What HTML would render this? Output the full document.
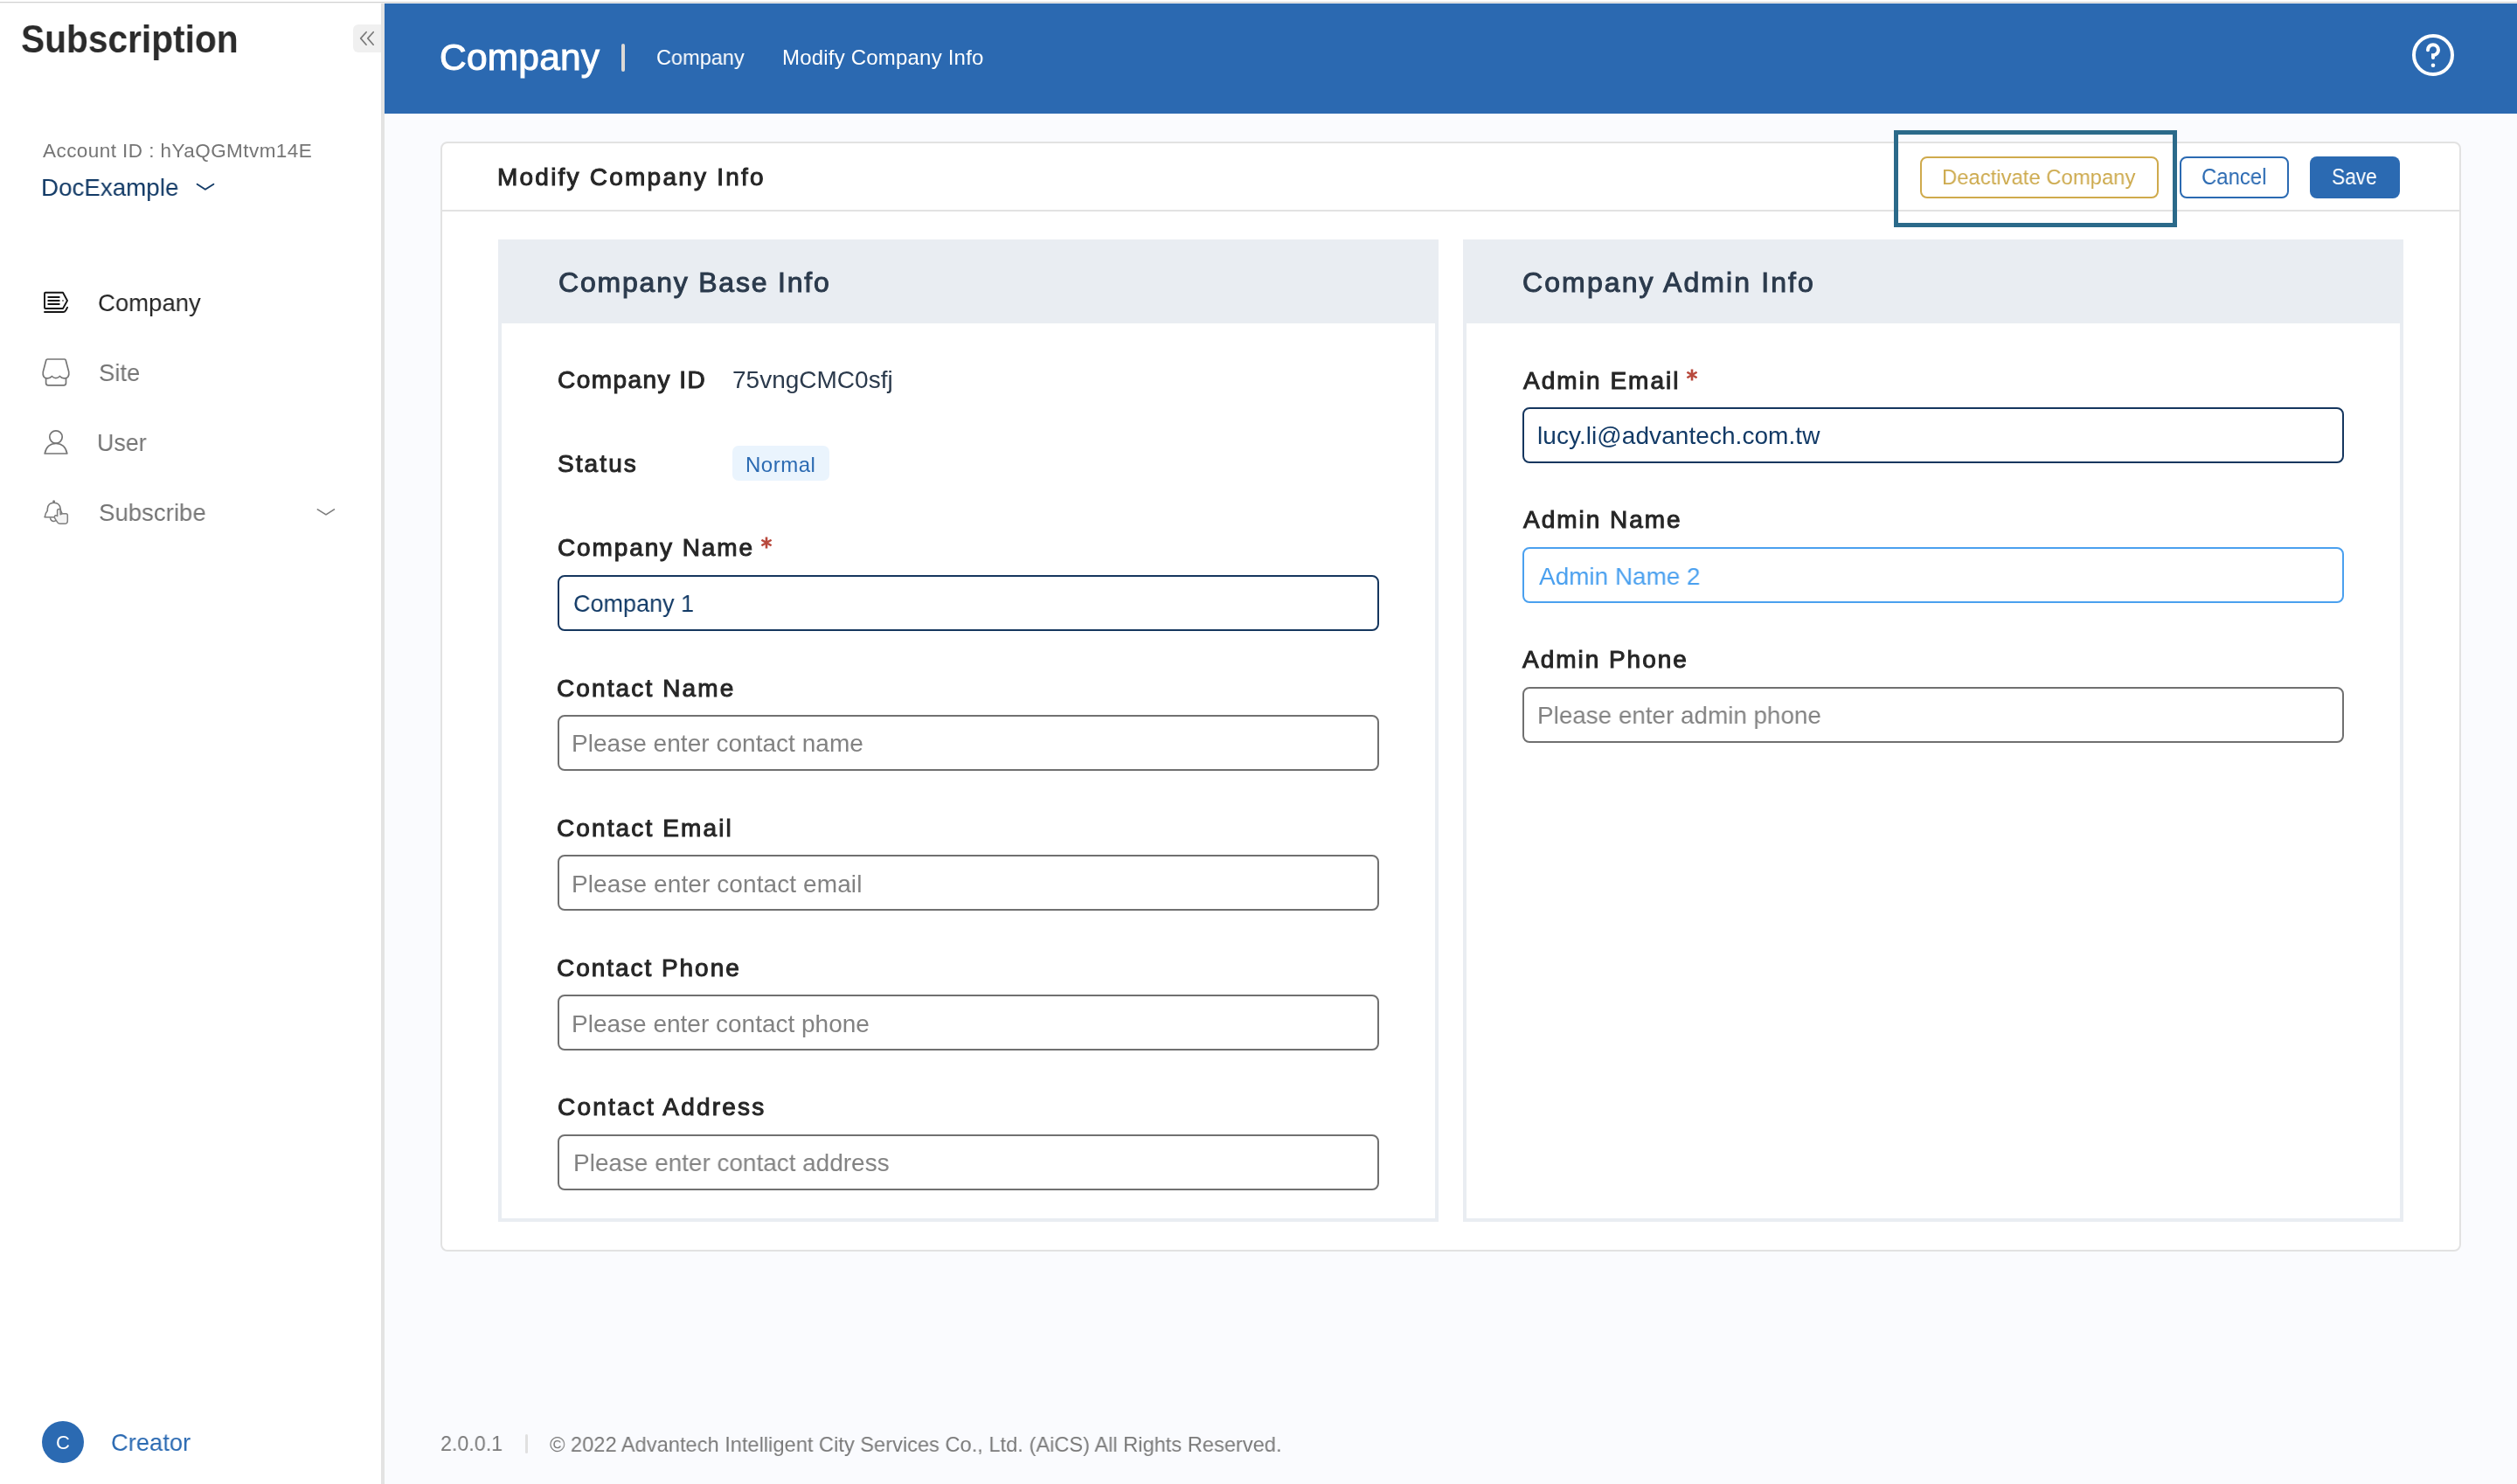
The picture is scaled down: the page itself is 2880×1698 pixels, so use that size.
<!DOCTYPE html>
<html><head><meta charset="utf-8"><style>
html,body{margin:0;padding:0;}
body{width:2880px;height:1698px;position:relative;overflow:hidden;background:#fafbfe;font-family:"Liberation Sans", sans-serif;}
.bx{position:absolute;}
.tx{position:absolute;white-space:nowrap;transform-origin:0 0;will-change:transform;}
.bl{display:inline-block;width:0;height:0;}
@media (max-width:1600px){html{zoom:0.5;}}
#side{position:absolute;left:0;top:0;width:436px;height:1698px;background:#fff;}
</style></head><body>
<div id="side"></div>
<div class="bx" style="left:0px;top:0px;width:2880px;height:4px;background:#fff;"></div>
<div class="bx" style="left:0px;top:2px;width:2880px;height:1px;background:#d2d2d2;"></div>
<div class="bx" style="left:0px;top:3px;width:2880px;height:1px;background:#f2f2f2;"></div>
<div class="bx" style="left:436px;top:4px;width:4px;height:1694px;background:#e3e3e3;"></div>
<div class="bx" style="left:404px;top:28px;width:32px;height:32px;background:#f0f0f0;border-radius:6px 0 0 6px;"></div>
<svg class="bx" style="left:404px;top:28px" width="32" height="32" viewBox="0 0 32 32"><path d="M15.1 8.7 L8.7 15.9 L15.1 23.2 M23.2 8.7 L16.8 15.9 L23.2 23.2" fill="none" stroke="#7a7a7a" stroke-width="1.7" stroke-linecap="round" stroke-linejoin="round"/></svg>
<div class="bx" style="left:440px;top:4px;width:2440px;height:126px;background:#2b69b1;"></div>
<div class="bx" style="left:711px;top:50px;width:4px;height:32px;background:#dcd9d6;border-radius:2px;"></div>
<svg class="bx" style="left:2758px;top:37px" width="52" height="52" viewBox="0 0 52 52"><circle cx="26" cy="26" r="22" fill="none" stroke="#fff" stroke-width="4"/><path d="M20 20.3 A6 6 0 1 1 26 26.2 L26 29" fill="none" stroke="#fff" stroke-width="4" stroke-linecap="round"/><circle cx="26" cy="37.8" r="2.3" fill="#fff"/></svg>
<div class="bx" style="left:504px;top:162px;width:2312px;height:1270px;background:#fff;border:2px solid #e2e2e2;border-radius:8px;box-sizing:border-box;"></div>
<div class="bx" style="left:506px;top:240px;width:2308px;height:2px;background:#e2e2e2;"></div>
<div class="bx" style="left:2197px;top:179px;width:273px;height:48px;border:2px solid #cfaa4c;border-radius:8px;box-sizing:border-box;background:#fff;"></div>
<div class="bx" style="left:2494px;top:179px;width:125px;height:48px;border:2px solid #2b6ab2;border-radius:8px;box-sizing:border-box;background:#fff;"></div>
<div class="bx" style="left:2643px;top:179px;width:103px;height:48px;background:#2b6ab2;border-radius:8px;"></div>
<div class="bx" style="left:2166.5px;top:149.2px;width:324.5px;height:111.30000000000001px;border:5.3px solid #2b6a8a;box-sizing:border-box;"></div>
<div class="bx" style="left:570px;top:274px;width:1076px;height:1124px;background:#fff;border:4px solid #e9edf2;border-top:0;box-sizing:border-box;"></div>
<div class="bx" style="left:570px;top:274px;width:1076px;height:96px;background:#e9edf2;"></div>
<div class="bx" style="left:1674px;top:274px;width:1076px;height:1124px;background:#fff;border:4px solid #e9edf2;border-top:0;box-sizing:border-box;"></div>
<div class="bx" style="left:1674px;top:274px;width:1076px;height:96px;background:#e9edf2;"></div>
<div class="bx" style="left:838px;top:510px;width:111px;height:40px;background:#eaf4fd;border-radius:7px;"></div>
<div class="bx" style="left:638px;top:658px;width:940px;height:64px;border:2px solid #15365e;border-radius:8px;box-sizing:border-box;background:#fff;"></div>
<div class="bx" style="left:638px;top:818px;width:940px;height:64px;border:2px solid #707070;border-radius:8px;box-sizing:border-box;background:#fff;"></div>
<div class="bx" style="left:638px;top:978px;width:940px;height:64px;border:2px solid #707070;border-radius:8px;box-sizing:border-box;background:#fff;"></div>
<div class="bx" style="left:638px;top:1138px;width:940px;height:64px;border:2px solid #707070;border-radius:8px;box-sizing:border-box;background:#fff;"></div>
<div class="bx" style="left:638px;top:1298px;width:940px;height:64px;border:2px solid #707070;border-radius:8px;box-sizing:border-box;background:#fff;"></div>
<div class="bx" style="left:1742px;top:466px;width:940px;height:64px;border:2px solid #15365e;border-radius:8px;box-sizing:border-box;background:#fff;"></div>
<div class="bx" style="left:1742px;top:626px;width:940px;height:64px;border:2px solid #4aa0ef;border-radius:8px;box-sizing:border-box;background:#fff;"></div>
<div class="bx" style="left:1742px;top:786px;width:940px;height:64px;border:2px solid #707070;border-radius:8px;box-sizing:border-box;background:#fff;"></div>
<svg class="bx" style="left:868.8px;top:613.0px" width="16" height="16" viewBox="0 0 16 16"><path d="M8 1.5 L8 14.5 M2.4 4.75 L13.6 11.25 M13.6 4.75 L2.4 11.25" stroke="#b8493d" stroke-width="2.6"/></svg>
<svg class="bx" style="left:1927.6px;top:421.0px" width="16" height="16" viewBox="0 0 16 16"><path d="M8 1.5 L8 14.5 M2.4 4.75 L13.6 11.25 M13.6 4.75 L2.4 11.25" stroke="#b8493d" stroke-width="2.6"/></svg>
<svg class="bx" style="left:222px;top:205px" width="26" height="18" viewBox="0 0 26 18"><path d="M3.6 5.7 L12.9 11.7 L22.4 5.7" fill="none" stroke="#123a66" stroke-width="1.9" stroke-linecap="round" stroke-linejoin="round"/></svg>
<svg class="bx" style="left:360px;top:578px" width="26" height="18" viewBox="0 0 26 18"><path d="M3.4 4.9 L13 10.9 L22.4 4.9" fill="none" stroke="#7d7d7d" stroke-width="1.7" stroke-linecap="round" stroke-linejoin="round"/></svg>
<div class="bx" style="left:601px;top:1641px;width:3px;height:22px;background:#e0e0e0;border-radius:2px;"></div>
<div class="bx" style="left:48px;top:1626px;width:48px;height:48px;background:#2b6ab2;border-radius:50%;"></div>
<svg class="bx" style="left:46px;top:330px" width="36" height="32" viewBox="46 330 36 32"><path d="M52 334.8 L72 334.8 L77 344 L72 353 L52 353 Q51 353 51 352 L51 335.8 Q51 334.8 52 334.8 Z" fill="none" stroke="#151515" stroke-width="1.9" stroke-linejoin="round"/><path d="M55.2 340 H67.8 M55.2 344 H67.8 M55.2 348 H67.8" stroke="#151515" stroke-width="1.8" stroke-linecap="round"/><circle cx="72" cy="344" r="0.9" fill="#555"/><path d="M51 357 H72.3 Q74.2 357 75.2 355.3 L77.1 351.8" fill="none" stroke="#151515" stroke-width="1.9" stroke-linecap="round"/></svg>
<svg class="bx" style="left:44px;top:406px" width="40" height="40" viewBox="44 406 40 40"><path d="M54.3 411 H73.9 Q74.9 411 75.2 412 L78.7 425.4 Q79.8 432.8 73.4 432.9 Q70.5 432.9 68.4 430.5 Q63.9 434.9 59.4 430.5 Q57.3 432.9 54.5 432.9 Q48.2 432.8 49.3 425.4 L52.8 412 Q53.1 411 54.3 411 Z" fill="none" stroke="#757575" stroke-width="1.7" stroke-linejoin="round"/><path d="M52.6 432.3 V438.3 Q52.6 440.8 55.1 440.8 H73 Q75.5 440.8 75.5 438.3 V432.3" fill="none" stroke="#757575" stroke-width="1.7"/></svg>
<svg class="bx" style="left:44px;top:486px" width="40" height="40" viewBox="44 486 40 40"><circle cx="64" cy="500" r="7.2" fill="none" stroke="#757575" stroke-width="1.7"/><path d="M51.2 519 Q53.5 507.5 64 507.5 Q74.5 507.5 76.8 519 Z" fill="none" stroke="#757575" stroke-width="1.7" stroke-linejoin="round"/></svg>
<svg class="bx" style="left:44px;top:566px" width="40" height="40" viewBox="44 566 40 40"><path d="M51.2 591.8 Q51.8 587.2 54.3 584.3 L54.3 582.3 Q55 575.3 61.6 575.3 Q68.4 575.3 69.2 582.3 L69.4 583.6 Q70 586 71.3 587.8" fill="none" stroke="#7a7a7a" stroke-width="1.6" stroke-linejoin="round"/><path d="M51.2 591.8 H63" fill="none" stroke="#7a7a7a" stroke-width="1.6" stroke-linecap="round"/><circle cx="61.6" cy="573.8" r="1.5" fill="#7a7a7a"/><path d="M57.4 592.4 Q58.2 596.4 61.6 596.5 Q63.6 596.4 65 594.6" fill="none" stroke="#7a7a7a" stroke-width="1.6"/><path d="M65.6 584.2 Q65.6 582.4 67.4 582.4 Q69.1 582.4 69.1 584.2 L69.2 588.8 Q70.3 587.7 72 587.7 L75.4 587.7 Q77.3 587.7 77.3 589.6 L77.3 596 Q77.3 599.3 74 599.3 L68.8 599.3 Q66.8 599.3 65.7 597.6 L62.8 593.2 Q61.6 590.6 63.5 589.8 Q64.8 589.4 65.6 590.4 Z" fill="#f4f4f4" stroke="#7f7f7f" stroke-width="1.5" stroke-linejoin="round"/></svg>
<div class="tx" id="sub" style="left:23.86px;top:21.81px;font-size:45px;line-height:45px;color:#2b2b2b;filter:blur(0.5px);font-weight:700;transform:scaleX(0.9041);">Subscription<i class="bl"></i></div>
<div class="tx" id="acc" style="left:49.20px;top:162.21px;font-size:22.5px;line-height:22.5px;color:#757575;font-weight:400;letter-spacing:0.441px;">Account ID : hYaQGMtvm14E<i class="bl"></i></div>
<div class="tx" id="doc" style="left:47.24px;top:201.00px;font-size:28px;line-height:28px;color:#123a66;font-weight:400;transform:scaleX(0.9912);">DocExample<i class="bl"></i></div>
<div class="tx" id="m_company" style="left:111.92px;top:332.81px;font-size:28px;line-height:28px;color:#262626;font-weight:400;transform:scaleX(0.9832);">Company<i class="bl"></i></div>
<div class="tx" id="m_site" style="left:112.63px;top:412.60px;font-size:28px;line-height:28px;color:#757575;font-weight:400;transform:scaleX(0.9783);">Site<i class="bl"></i></div>
<div class="tx" id="m_user" style="left:111.49px;top:493.00px;font-size:28px;line-height:28px;color:#757575;font-weight:400;transform:scaleX(0.9580);">User<i class="bl"></i></div>
<div class="tx" id="m_subscribe" style="left:112.61px;top:573.00px;font-size:28px;line-height:28px;color:#757575;font-weight:400;transform:scaleX(0.9854);">Subscribe<i class="bl"></i></div>
<div class="tx" id="creator" style="left:127.34px;top:1637.00px;font-size:28px;line-height:28px;color:#2b6ab2;font-weight:400;transform:scaleX(0.9762);">Creator<i class="bl"></i></div>
<div class="tx" id="avatar_c" style="left:63.74px;top:1640.00px;font-size:22px;line-height:22px;color:#ffffff;font-weight:400;">C<i class="bl"></i></div>
<div class="tx" id="h_title" style="left:502.50px;top:45.31px;font-size:42.5px;line-height:42.5px;color:#ffffff;font-weight:400;-webkit-text-stroke:1.0px #ffffff;letter-spacing:0.200px;">Company<i class="bl"></i></div>
<div class="tx" id="h_bc1" style="left:751.02px;top:54.01px;font-size:24px;line-height:24px;color:#ffffff;font-weight:400;transform:scaleX(0.9804);">Company<i class="bl"></i></div>
<div class="tx" id="h_bc2" style="left:895.20px;top:54.01px;font-size:24px;line-height:24px;color:#ffffff;font-weight:400;letter-spacing:0.200px;">Modify Company Info<i class="bl"></i></div>
<div class="tx" id="c_title" style="left:569.20px;top:189.31px;font-size:28px;line-height:28px;color:#262626;font-weight:400;-webkit-text-stroke:1.0px #262626;letter-spacing:2.222px;">Modify Company Info<i class="bl"></i></div>
<div class="tx" id="b_deact" style="left:2222.05px;top:191.21px;font-size:24.5px;line-height:24.5px;color:#cdaa4e;font-weight:400;transform:scaleX(0.9733);">Deactivate Company<i class="bl"></i></div>
<div class="tx" id="b_cancel" style="left:2519.06px;top:190.40px;font-size:25px;line-height:25px;color:#2b6ab2;font-weight:400;transform:scaleX(0.9575);">Cancel<i class="bl"></i></div>
<div class="tx" id="b_save" style="left:2668.09px;top:190.40px;font-size:25px;line-height:25px;color:#ffffff;font-weight:400;transform:scaleX(0.9091);">Save<i class="bl"></i></div>
<div class="tx" id="s1_title" style="left:638.80px;top:307.00px;font-size:32px;line-height:32px;color:#2b3a4c;font-weight:400;-webkit-text-stroke:1.0px #2b3a4c;letter-spacing:1.794px;">Company Base Info<i class="bl"></i></div>
<div class="tx" id="s2_title" style="left:1742.00px;top:307.11px;font-size:32px;line-height:32px;color:#2b3a4c;font-weight:400;-webkit-text-stroke:1.0px #2b3a4c;letter-spacing:2.108px;">Company Admin Info<i class="bl"></i></div>
<div class="tx" id="l_cid" style="left:638.00px;top:421.00px;font-size:28px;line-height:28px;color:#262626;font-weight:400;-webkit-text-stroke:1.0px #262626;letter-spacing:1.454px;">Company ID<i class="bl"></i></div>
<div class="tx" id="v_cid" style="left:838.20px;top:421.00px;font-size:28px;line-height:28px;color:#2b3a4c;font-weight:400;">75vngCMC0sfj<i class="bl"></i></div>
<div class="tx" id="l_status" style="left:638.00px;top:516.81px;font-size:28px;line-height:28px;color:#262626;font-weight:400;-webkit-text-stroke:1.0px #262626;letter-spacing:2.080px;">Status<i class="bl"></i></div>
<div class="tx" id="v_normal" style="left:853.10px;top:520.21px;font-size:24px;line-height:24px;color:#2b6ab2;font-weight:400;letter-spacing:0.520px;">Normal<i class="bl"></i></div>
<div class="tx" id="l_cname" style="left:638.00px;top:613.00px;font-size:28px;line-height:28px;color:#262626;font-weight:400;-webkit-text-stroke:1.0px #262626;letter-spacing:1.881px;">Company Name<i class="bl"></i></div>
<div class="tx" id="v_cname" style="left:656.03px;top:677.21px;font-size:28px;line-height:28px;color:#123a66;font-weight:400;transform:scaleX(0.9649);">Company 1<i class="bl"></i></div>
<div class="tx" id="l_ctname" style="left:637.40px;top:773.61px;font-size:28px;line-height:28px;color:#262626;font-weight:400;-webkit-text-stroke:1.0px #262626;letter-spacing:2.119px;">Contact Name<i class="bl"></i></div>
<div class="tx" id="p_ctname" style="left:654.30px;top:837.31px;font-size:28px;line-height:28px;color:#828282;font-weight:400;letter-spacing:0.032px;">Please enter contact name<i class="bl"></i></div>
<div class="tx" id="l_ctemail" style="left:637.40px;top:934.00px;font-size:28px;line-height:28px;color:#262626;font-weight:400;-webkit-text-stroke:1.0px #262626;letter-spacing:2.118px;">Contact Email<i class="bl"></i></div>
<div class="tx" id="p_ctemail" style="left:654.30px;top:997.71px;font-size:28px;line-height:28px;color:#828282;font-weight:400;letter-spacing:0.096px;">Please enter contact email<i class="bl"></i></div>
<div class="tx" id="l_ctphone" style="left:637.40px;top:1094.41px;font-size:28px;line-height:28px;color:#262626;font-weight:400;-webkit-text-stroke:1.0px #262626;letter-spacing:1.958px;">Contact Phone<i class="bl"></i></div>
<div class="tx" id="p_ctphone" style="left:654.29px;top:1158.00px;font-size:28px;line-height:28px;color:#828282;font-weight:400;">Please enter contact phone<i class="bl"></i></div>
<div class="tx" id="l_ctaddr" style="left:638.00px;top:1253.21px;font-size:28px;line-height:28px;color:#262626;font-weight:400;-webkit-text-stroke:1.0px #262626;letter-spacing:2.201px;">Contact Address<i class="bl"></i></div>
<div class="tx" id="p_ctaddr" style="left:655.50px;top:1317.21px;font-size:28px;line-height:28px;color:#828282;font-weight:400;transform:scaleX(0.9968);">Please enter contact address<i class="bl"></i></div>
<div class="tx" id="l_aemail" style="left:1742.80px;top:421.71px;font-size:28px;line-height:28px;color:#262626;font-weight:400;-webkit-text-stroke:1.0px #262626;letter-spacing:2.040px;">Admin Email<i class="bl"></i></div>
<div class="tx" id="v_aemail" style="left:1759.00px;top:484.90px;font-size:28px;line-height:28px;color:#123a66;font-weight:400;letter-spacing:0.059px;">lucy.li@advantech.com.tw<i class="bl"></i></div>
<div class="tx" id="l_aname" style="left:1742.80px;top:580.81px;font-size:28px;line-height:28px;color:#262626;font-weight:400;-webkit-text-stroke:1.0px #262626;letter-spacing:1.975px;">Admin Name<i class="bl"></i></div>
<div class="tx" id="v_aname" style="left:1760.70px;top:645.50px;font-size:28px;line-height:28px;color:#4aa0ef;font-weight:400;transform:scaleX(0.9966);">Admin Name 2<i class="bl"></i></div>
<div class="tx" id="l_aphone" style="left:1742.20px;top:740.61px;font-size:28px;line-height:28px;color:#262626;font-weight:400;-webkit-text-stroke:1.0px #262626;letter-spacing:1.970px;">Admin Phone<i class="bl"></i></div>
<div class="tx" id="p_aphone" style="left:1758.51px;top:804.50px;font-size:28px;line-height:28px;color:#828282;font-weight:400;transform:scaleX(0.9939);">Please enter admin phone<i class="bl"></i></div>
<div class="tx" id="f_ver" style="left:504.15px;top:1640.01px;font-size:24px;line-height:24px;color:#7a7a7a;font-weight:400;transform:scaleX(0.9692);">2.0.0.1<i class="bl"></i></div>
<div class="tx" id="f_copy" style="left:629.20px;top:1641.01px;font-size:24px;line-height:24px;color:#7a7a7a;font-weight:400;transform:scaleX(0.9852);">© 2022 Advantech Intelligent City Services Co., Ltd. (AiCS) All Rights Reserved.<i class="bl"></i></div>
</body></html>
